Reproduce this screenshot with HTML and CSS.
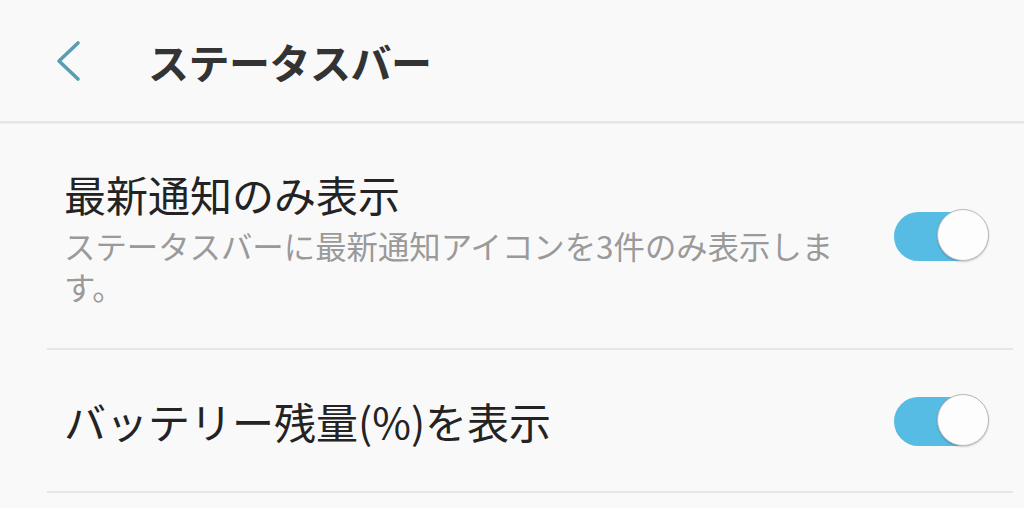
FILE: index.html
```html
<!DOCTYPE html>
<html lang="ja">
<head>
<meta charset="utf-8">
<link rel="stylesheet" href="styles.css">
</head>
<body>
<header class="appbar">
  <span class="back">
    <svg width="30" height="44" viewBox="0 0 30 44"><polyline points="24,4 5,22 24,40" fill="none" stroke="#5a9db3" stroke-width="3.6" stroke-linecap="round" stroke-linejoin="round"/></svg>
  </span>
  <h1 class="title">ステータスバー</h1>
</header>
<main class="list">
  <div class="row row-tall">
    <div class="text">
      <div class="row-title">最新通知のみ表示</div>
      <div class="row-sub">ステータスバーに最新通知アイコンを3件のみ表示します。</div>
    </div>
    <div class="toggle on"><span class="track"></span><span class="knob"></span></div>
  </div>
  <div class="row row-short">
    <div class="text">
      <div class="row-title">バッテリー残量(%)を表示</div>
    </div>
    <div class="toggle on"><span class="track"></span><span class="knob"></span></div>
  </div>
</main>
</body>
</html>
```
FILE: styles.css
```css
html, body {
  margin: 0;
  padding: 0;
  background: #f9f9f9;
  font-family: "Noto Sans CJK JP", "Noto Sans", sans-serif;
  width: 1024px;
  height: 508px;
  overflow: hidden;
}

.appbar {
  height: 121px;
  display: flex;
  align-items: center;
  border-bottom: 2px solid #e5e5e5;
  box-shadow: 0 1px 1px rgba(0,0,0,0.03);
}

.back {
  display: flex;
  margin-left: 54px;
  width: 30px;
  height: 44px;
}

.title {
  margin: 0 0 0 64px;
  font-size: 41px;
  font-weight: bold;
  color: #333;
  line-height: 56px;
  letter-spacing: -0.5px;
}

.list {
  padding: 0 11px 0 47px;
}

.row {
  display: flex;
  align-items: center;
  padding: 0 23px 0 17px;
  border-bottom: 2px solid #e6e6e6;
}

.row-tall {
  height: 225px;
}

.row-short {
  height: 141px;
}

.text {
  flex: 1;
  margin-right: 45px;
}

.row-title {
  font-size: 42px;
  line-height: 58px;
  color: #232323;
}

.row-sub {
  font-size: 31.4px;
  line-height: 41px;
  color: #9a9a9a;
  margin-top: 2px;
}

.toggle {
  position: relative;
  width: 96px;
  height: 54px;
  flex: none;
}

.track {
  position: absolute;
  left: 0;
  top: 3px;
  width: 88px;
  height: 49px;
  border-radius: 25px;
  background: #57bce3;
}

.knob {
  position: absolute;
  right: 1px;
  top: 0;
  width: 52px;
  height: 52px;
  box-sizing: border-box;
  border-radius: 50%;
  background: #fdfdfd;
  border: 1px solid #b9b9b9;
  box-shadow: 0 1px 2px rgba(0,0,0,0.2);
}
```
